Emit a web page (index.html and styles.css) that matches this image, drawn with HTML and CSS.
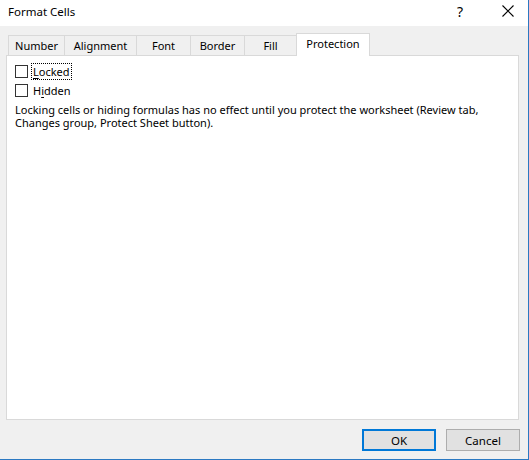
FILE: index.html
```html
<!DOCTYPE html>
<html>
<head>
<meta charset="utf-8">
<link rel="stylesheet" href="styles.css">
</head>
<body>
<div class="window">
  <div class="titlebar">
    <span class="title">Format Cells</span>
    <span class="help">?</span>
    <span class="close"><svg width="12" height="12" viewBox="0 0 12 12"><path d="M0.5 0.5 L11.5 11.5 M11.5 0.5 L0.5 11.5" stroke="#000" stroke-width="1.1" fill="none"/></svg></span>
  </div>
  <div class="body">
    <div class="tabs">
      <div class="tab t-number">Number</div>
      <div class="tab t-align">Alignment</div>
      <div class="tab t-font">Font</div>
      <div class="tab t-border">Border</div>
      <div class="tab t-fill">Fill</div>
      <div class="tab active t-prot">Protection</div>
    </div>
    <div class="panel">
      <div class="check-row first">
        <span class="box"></span>
        <span class="label focus"><u>L</u>ocked</span>
      </div>
      <div class="check-row">
        <span class="box"></span>
        <span class="label">H<u>i</u>dden</span>
      </div>
      <p class="note">Locking cells or hiding formulas has no effect until you protect the worksheet (Review tab, Changes group, Protect Sheet button).</p>
    </div>
    <div class="buttons">
      <button class="btn default">OK</button>
      <button class="btn">Cancel</button>
    </div>
  </div>
</div>
</body>
</html>
```
FILE: styles.css
```css
html, body {
  margin: 0;
  padding: 0;
}
body {
  width: 529px;
  height: 460px;
  overflow: hidden;
  font-family: "Noto Sans", "Liberation Sans", sans-serif;
  font-size: 11px;
  color: #000;
}
.window {
  width: 528px;
  height: 459px;
  background: #f0f0f0;
  border-right: 1px solid #2b79c2;
  border-bottom: 1px solid #2b79c2;
  display: flex;
  flex-direction: column;
}
.titlebar {
  height: 26px;
  background: #fff;
  display: flex;
  align-items: center;
  position: relative;
}
.title {
  margin-left: 8px;
  font-size: 11.5px;
  margin-top: -4px;
}
.help {
  position: absolute;
  left: 457px;
  top: 2px;
  font-size: 14px;
}
.close {
  position: absolute;
  left: 502px;
  top: 5px;
  width: 12px;
  height: 12px;
  display: flex;
}
.body {
  flex: 1;
  display: flex;
  flex-direction: column;
  padding: 7px 0 0 6px;
}
.tabs {
  display: flex;
  align-items: flex-end;
  height: 22px;
  padding-left: 2px;
  position: relative;
  z-index: 1;
}
.tab {
  height: 20px;
  box-sizing: border-box;
  border: 1px solid #d9d9d9;
  border-bottom: none;
  border-right: none;
  display: flex;
  align-items: center;
  justify-content: center;
  background: #f0f0f0;
  padding-bottom: 1px;
}
.t-number { width: 56px; }
.t-align { width: 72px; }
.t-font { width: 54px; }
.t-border { width: 54px; }
.t-fill { width: 52px; }
.tab.active {
  height: 23px;
  width: 74px;
  background: #fff;
  border-right: 1px solid #d9d9d9;
  margin-bottom: -1px;
  padding-bottom: 3px;
}
.panel {
  width: 513px;
  height: 365px;
  box-sizing: border-box;
  background: #fff;
  border: 1px solid #d9d9d9;
  padding: 9px 0 0 8px;
}
.check-row {
  display: flex;
  align-items: center;
  height: 13px;
  margin-bottom: 6px;
}
.box {
  width: 13px;
  height: 13px;
  box-sizing: border-box;
  border: 1px solid #333;
  background: #fff;
  margin-right: 5px;
  flex: none;
}
.label {
  line-height: 15px;
  padding: 0 1px;
  margin-left: -1px;
}
.label.focus {
  outline: 1px dotted #000;
  outline-offset: 0;
}
.label u {
  text-decoration-thickness: 1px;
  text-underline-offset: 2px;
}
.note {
  margin: 4px 0 0 0;
  line-height: 13px;
}
.buttons {
  display: flex;
  gap: 10px;
  padding: 9px 0 0 356px;
}
.btn {
  width: 74px;
  height: 22px;
  box-sizing: border-box;
  background: #e1e1e1;
  border: 1px solid #adadad;
  font-family: inherit;
  font-size: 11.5px;
  color: #000;
  padding: 0;
  margin: 0;
}
.btn.default {
  border: 2px solid #0078d7;
}
```
